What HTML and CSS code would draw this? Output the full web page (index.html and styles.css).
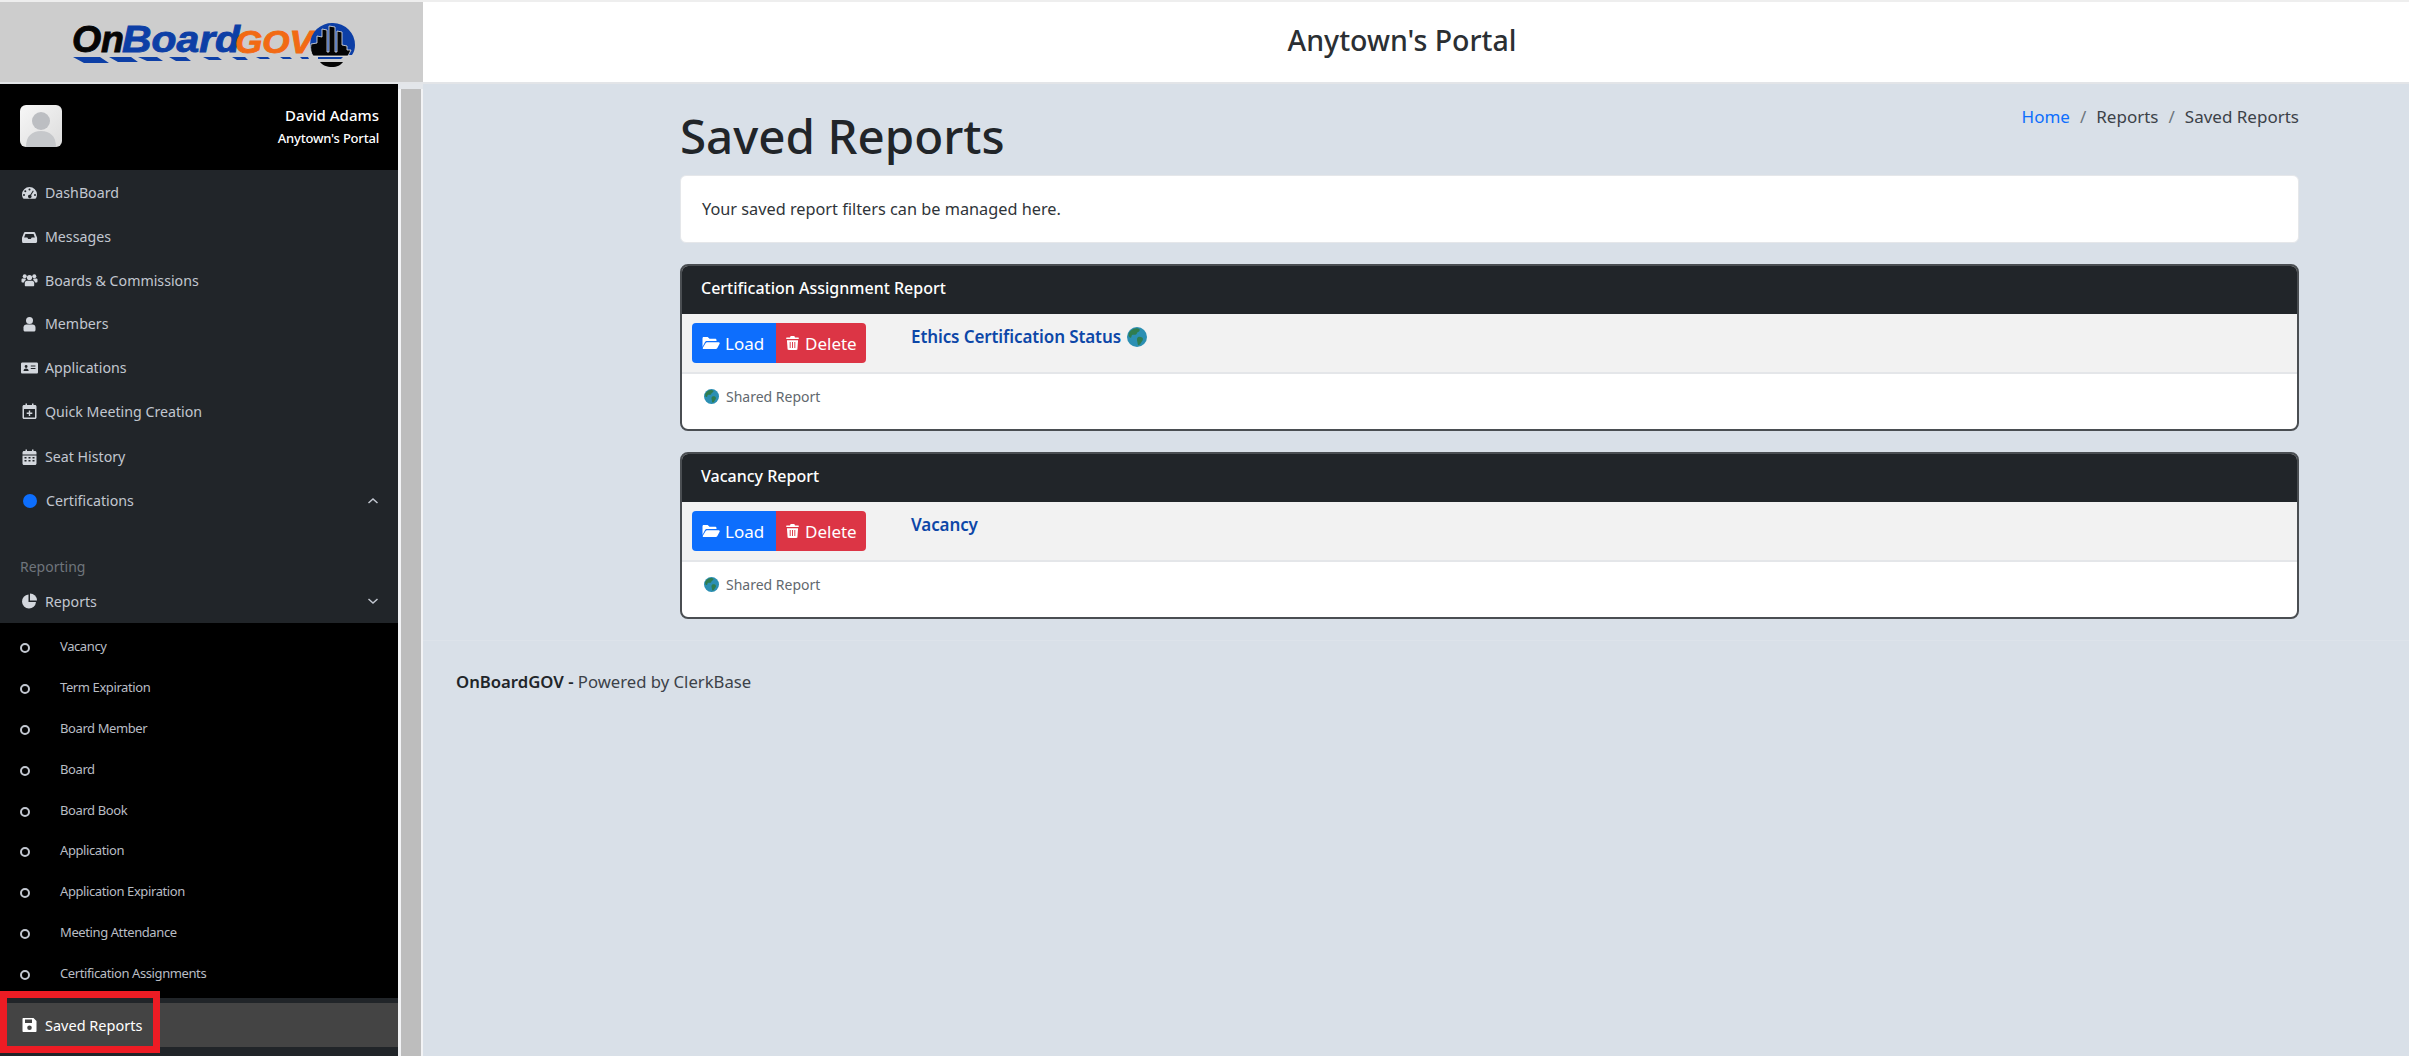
FILE: index.html
```html
<!DOCTYPE html>
<html lang="en">
<head>
  <meta charset="UTF-8" />
  <title>Saved Reports | OnBoardGOV</title>
  <link rel="stylesheet" href="styles.css">
</head>
<body>

  <svg class="sprite" xmlns="http://www.w3.org/2000/svg">
    <symbol id="i-gauge" viewBox="0 0 16 16"><path fill-rule="evenodd" d="M8 2a7.5 7.5 0 0 0-7.5 7.5c0 1.4.4 2.7 1 3.8.2.3.5.5.9.5h11.2c.4 0 .7-.2.9-.5.6-1.100 1-2.400 1-3.800A7.500 7.500 0 0 0 8 2zM8 3.500a1 1 0 1 1 0 2 1 1 0 0 1 0-2zM3.800 5.300a1 1 0 1 1 0 2 1 1 0 0 1 0-2zM2.500 9a1 1 0 1 1 0 2 1 1 0 0 1 0-2zM13.500 9a1 1 0 1 1 0 2 1 1 0 0 1 0-2zM11.400 5.400l.9.5-2.700 4.300a1.800 1.800 0 1 1-.9-.5z"/></symbol>
    <symbol id="i-inbox" viewBox="0 0 16 16"><path fill-rule="evenodd" d="M3.500 3h9c.5 0 .9.300 1.100.7l1.900 4.800c.1.200.1.400.1.600v3.400c0 .8-.7 1.500-1.500 1.500h-13C.8 13.500.5 12.800.500 12V9.100c0-.2 0-.4.100-.6l1.900-4.800c.2-.4.600-.7 1-.7zM3.900 5L2.600 8.500h3.200l.9 1.500h2.600l.9-1.500h3.200L12.100 5z"/></symbol>
    <symbol id="i-users" viewBox="0 0 16 16"><circle cx="3.200" cy="4.200" r="2"/><circle cx="12.800" cy="4.200" r="2"/><circle cx="8" cy="5.500" r="2.600"/><path d="M0 7.500c0-.5.500-1 1-1h3l.4 1.500c-1 .5-1.700 1.500-1.900 2.600H1c-.6 0-1-.4-1-1zM16 7.500c0-.5-.5-1-1-1h-3l-.4 1.500c1 .5 1.700 1.500 1.900 2.600H15c.6 0 1-.4 1-1zM5.500 8.800h5c1.200 0 2.200 1 2.200 2.200v2.200c0 .6-.4 1-1 1H4.300c-.6 0-1-.4-1-1V11c0-1.200 1-2.200 2.200-2.200z"/></symbol>
    <symbol id="i-user" viewBox="0 0 16 16"><circle cx="8" cy="4.500" r="3.500"/><path d="M5 8.500h6c1.700 0 3 1.300 3 3v2.500c0 .8-.7 1.500-1.500 1.500h-9C2.700 15.500 2 14.800 2 14v-2.500c0-1.700 1.300-3 3-3z"/></symbol>
    <symbol id="i-idcard" viewBox="0 0 20 16"><path fill-rule="evenodd" d="M1.500 1.500h17c.8 0 1.500.7 1.500 1.500v10c0 .8-.7 1.500-1.500 1.500h-17C.7 14.500 0 13.800 0 13V3c0-.8.7-1.500 1.500-1.500zM11.500 5v1.200H17V5zM11.500 8v1.200H17V8zM6 4.500a1.700 1.700 0 1 0 0 3.400 1.700 1.700 0 0 0 0-3.400zM3 11.500h6c0-1.500-1-2.800-3-2.800s-3 1.300-3 2.800z"/></symbol>
    <symbol id="i-calplus" viewBox="0 0 16 16"><path fill-rule="evenodd" d="M4 .5h1.500V2h5V.5H12V2h1.500c.8 0 1.500.7 1.500 1.500v11c0 .8-.7 1.500-1.500 1.500h-11C1.700 16 1 15.300 1 14.500v-11C1 2.700 1.700 2 2.500 2H4zM2.500 6v8.500h11V6zM7.300 7.500h1.400v2.100h2.100V11H8.700v2.100H7.300V11H5.200V9.600h2.100z"/></symbol>
    <symbol id="i-calendar" viewBox="0 0 16 16"><path fill-rule="evenodd" d="M4 .5h1.500V2h5V.5H12V2h1.500c.8 0 1.500.7 1.500 1.500V5.500H1V3.500C1 2.700 1.700 2 2.500 2H4zM1 6.500h14v8c0 .8-.7 1.500-1.500 1.500h-11C1.700 16 1 15.300 1 14.500zM3 8v1.500h2V8zM7 8v1.500h2V8zM11 8v1.500h2V8zM3 11v1.500h2V11zM7 11v1.500h2V11zM11 11v1.500h2V11z"/></symbol>
    <symbol id="i-pie" viewBox="0 0 16 16"><path d="M7 1.500A7 7 0 1 0 14.500 9H7z"/><path d="M8.500 .5V7.500h7A7 7 0 0 0 8.500 .5z"/></symbol>
    <symbol id="i-save" viewBox="0 0 16 16"><path fill-rule="evenodd" d="M2 1h10l3 3v10c0 .6-.4 1-1 1H2c-.6 0-1-.4-1-1V2c0-.6.4-1 1-1zM3.500 2.500V6h7V2.500zM8 8.500a2.300 2.300 0 1 0 0 4.600 2.300 2.300 0 0 0 0-4.600z"/></symbol>
    <symbol id="i-folder" viewBox="0 0 18 16"><path d="M1.500 2h4.200l1.800 1.800h5.700c.8 0 1.300.6 1.300 1.300V6H5c-.9 0-1.700.5-2.100 1.300L.5 12V3.500C.5 2.700.9 2 1.500 2z"/><path d="M5 7.300h11.800c.7 0 1.200.8.800 1.400l-2.400 4.500c-.3.500-.8.800-1.300.8H1.600c-.7 0-1.100-.7-.8-1.300l2.900-4.700c.3-.4.800-.7 1.300-.7z"/></symbol>
    <symbol id="i-trash" viewBox="0 0 14 16"><path fill-rule="evenodd" d="M5 .5h4l.7 1.500H13c.6 0 1 .4 1 1s-.4 .8-1 .8H1c-.6 0-1-.2-1-.8s.4-1 1-1h3.300zM1 5h12l-.7 9.500c0 .6-.6 1-1.200 1H2.900c-.6 0-1.200-.4-1.200-1zM4 7v6.500h1V7zM6.500 7v6.500h1V7zM9 7v6.500h1V7z"/></symbol>
    <symbol id="i-globe" viewBox="0 0 16 16"><circle cx="8" cy="8" r="8" fill="#2b8fb3"/><path fill="#2f7d4f" d="M5 1.500c1.800-.8 4-.6 5 .2.600.8-.3 2-1.300 2.300-.8.300-.6 1.500-1.600 2-1 .6-2.200-.2-3 .4-.8.700-.3 1.800-1 2.200C2.400 9 1 7.500 1.200 6 1.500 4 3.300 2.300 5 1.500zM9 8c1.500-.5 3.200.200 3.700 1.200.3 1-.5 2-1.200 3-.6 1-1.500 2.500-2.300 2.300-.9-.3-.6-2-1-3C7.800 10.500 7.800 8.500 9 8z"/></symbol>
  </svg>

  <div class="page">

    <header class="topbar">
      <div class="brand">
        <svg class="logo" width="423" height="80" viewBox="0 2 423 80">
          <text class="logo-on" x="72" y="52" textLength="52" lengthAdjust="spacingAndGlyphs">On</text>
          <text class="logo-board" x="122" y="52" textLength="118" lengthAdjust="spacingAndGlyphs">Board</text>
          <text class="logo-gov" x="235" y="53" textLength="78" lengthAdjust="spacingAndGlyphs">GOV</text>
          <path fill="#0d3fa6" d="M73 57h27l9 6H84zM109 57h22l7 5h-20zM138 57h19l6 4h-16zM169 57h17l5 4h-15zM203 57h15l4 3h-13zM232 57h13l3 3h-11zM256 57h12l2 2h-10zM280 57h10l2 2h-9zM300 57h8l1 2h-7zM318 57h25l-2 2h-23z"/>
          <path fill="#0d3fa6" d="M333 23a22 22 0 0 1 22 22c0 4-1 7-3 10h-38c-3-3-4-7-4-10a22 22 0 0 1 23-22z"/>
          <path fill="#050505" stroke="#e8e8e8" stroke-width=".8" d="M311 44l6-1v-7l5 1v-8l5 1v22h2V26l6 1v25h2V31l5 1v13l5 1v4h4c-1 2-2 4-3 6h-35c-2-3-3-7-2-12z"/>
          <path fill="#050505" d="M320 62h23c-2 3-6 5-11 5s-10-2-12-5z"/>
        </svg>
      </div>
      <h1 class="portal-title">Anytown's Portal</h1>
    </header>

    <div class="body-row">

      <aside class="sidebar">
        <div class="side-panel">
          <div class="user-panel">
            <div class="avatar">
              <svg viewBox="0 0 42 42" width="42" height="42"><circle cx="21" cy="16" r="9" fill="#bcbec2"/><path d="M6 42c0-11 6-16 15-16s15 5 15 16z" fill="#c6c8cb"/></svg>
            </div>
            <div class="user-info">
              <div class="user-name">David Adams</div>
              <div class="user-portal">Anytown's Portal</div>
            </div>
          </div>

          <nav class="nav-main">
            <a class="nav-item"><svg class="icon"><use href="#i-gauge"/></svg>DashBoard</a>
            <a class="nav-item"><svg class="icon"><use href="#i-inbox"/></svg>Messages</a>
            <a class="nav-item"><svg class="icon"><use href="#i-users"/></svg>Boards &amp; Commissions</a>
            <a class="nav-item"><svg class="icon"><use href="#i-user"/></svg>Members</a>
            <a class="nav-item"><svg class="icon"><use href="#i-idcard"/></svg>Applications</a>
            <a class="nav-item"><svg class="icon"><use href="#i-calplus"/></svg>Quick Meeting Creation</a>
            <a class="nav-item nav-gap"><svg class="icon"><use href="#i-calendar"/></svg>Seat History</a>
            <a class="nav-item"><span class="dot"></span>Certifications<svg class="chevron" viewBox="0 0 12 8"><path d="M1.500 6L6 2l4.500 4"/></svg></a>
            <div class="nav-heading">Reporting</div>
            <a class="nav-item nav-open"><svg class="icon"><use href="#i-pie"/></svg>Reports<svg class="chevron" viewBox="0 0 12 8"><path d="M1.500 2L6 6l4.500-4"/></svg></a>
          </nav>

          <ul class="nav-sub">
            <li>Vacancy</li>
            <li>Term Expiration</li>
            <li>Board Member</li>
            <li>Board</li>
            <li>Board Book</li>
            <li>Application</li>
            <li>Application Expiration</li>
            <li>Meeting Attendance</li>
            <li>Certification Assignments</li>
          </ul>

          <div class="nav-bottom">
            <a class="nav-item nav-active"><svg class="icon"><use href="#i-save"/></svg>Saved Reports</a>
          </div>
        </div>
        <div class="side-scroll"><div class="side-track"></div></div>
        <div class="callout"></div>
      </aside>

      <main class="main">
        <div class="content">
          <div class="page-head">
            <h2>Saved Reports</h2>
            <ol class="crumbs">
              <li><a>Home</a></li>
              <li>Reports</li>
              <li>Saved Reports</li>
            </ol>
          </div>

          <div class="intro">Your saved report filters can be managed here.</div>

          <section class="report">
            <div class="report-head">Certification Assignment Report</div>
            <div class="report-row">
              <div class="btn-group">
                <button class="btn btn-load"><svg class="btn-icon"><use href="#i-folder"/></svg>Load</button>
                <button class="btn btn-delete"><svg class="btn-icon trash"><use href="#i-trash"/></svg>Delete</button>
              </div>
              <a class="report-link">Ethics Certification Status <svg class="globe"><use href="#i-globe"/></svg></a>
            </div>
            <div class="report-foot"><svg class="globe"><use href="#i-globe"/></svg>Shared Report</div>
          </section>

          <section class="report">
            <div class="report-head">Vacancy Report</div>
            <div class="report-row">
              <div class="btn-group">
                <button class="btn btn-load"><svg class="btn-icon"><use href="#i-folder"/></svg>Load</button>
                <button class="btn btn-delete"><svg class="btn-icon trash"><use href="#i-trash"/></svg>Delete</button>
              </div>
              <a class="report-link">Vacancy</a>
            </div>
            <div class="report-foot"><svg class="globe"><use href="#i-globe"/></svg>Shared Report</div>
          </section>
        </div>

        <footer class="footer"><strong>OnBoardGOV -</strong> Powered by ClerkBase</footer>
      </main>

    </div>
  </div>

</body>
</html>
```
FILE: styles.css
```css
:root {
  --bg: #d9e0e8;
  --dark: #212529;
  --side-text: #c2c7d0;
  --text: #212529;
}

* { box-sizing: border-box; }

html, body {
  margin: 0;
  height: 100%;
  overflow: hidden;
}

body {
  font-family: "Noto Sans", "Open Sans", sans-serif;
  font-size: 16px;
  color: var(--text);
  background: var(--bg);
}

.sprite {
  width: 0;
  height: 0;
  display: block;
  overflow: hidden;
}

.page {
  height: 1056px;
  display: flex;
  flex-direction: column;
}

/* top bar */
.topbar {
  height: 84px;
  flex: none;
  display: flex;
  background: #fff;
  border-top: 2px solid #eee;
  border-bottom: 2px solid #e3e5e8;
}

.brand {
  width: 423px;
  flex: none;
  background: #cdcdcd;
}

.logo { display: block; }

.logo text {
  font-family: "Liberation Sans", sans-serif;
  font-weight: bold;
  font-style: italic;
  stroke-width: 0.9;
}

.logo-on { font-size: 37px; fill: #050505; stroke: #050505; }
.logo-board { font-size: 37px; fill: #0d3fa6; stroke: #0d3fa6; }
.logo-gov { font-size: 31px; fill: #f26a14; stroke: #f26a14; }

.portal-title {
  flex: 1;
  margin: 0;
  padding-right: 28px;
  text-align: center;
  font-size: 28.500px;
  font-weight: 500;
  line-height: 76px;
  color: #2b2f33;
}

.body-row {
  flex: 1;
  display: flex;
  min-height: 0;
}

/* sidebar */
.sidebar {
  width: 423px;
  flex: none;
  display: flex;
  position: relative;
  background: #fff;
}

.side-panel {
  width: 398px;
  flex: none;
  background: var(--dark);
  display: flex;
  flex-direction: column;
}

.side-scroll {
  width: 25px;
  padding: 5px 2px 0 3px;
  background: linear-gradient(#e3e6ea 5px, #f2f3f5 5px);
}

.side-track {
  height: 100%;
  background: #bdbdbd;
}

.user-panel {
  height: 86px;
  flex: none;
  background: #000;
  display: flex;
  align-items: center;
  justify-content: space-between;
  padding: 0 19px 3px 20px;
  color: #fff;
}

.avatar {
  width: 42px;
  height: 42px;
  border-radius: 6px;
  overflow: hidden;
  background: linear-gradient(135deg, #f7f7f7, #dcdcdc);
}

.avatar svg { display: block; }

.user-info {
  text-align: right;
  padding-top: 3px;
}

.user-name {
  font-size: 15px;
  font-weight: 500;
  line-height: 22px;
}

.user-portal {
  font-size: 13px;
  font-weight: 500;
  line-height: 25px;
  letter-spacing: -0.2px;
}

.nav-main { padding-top: 1px; }

.nav-item {
  height: 43.700px;
  display: flex;
  align-items: center;
  padding: 0 19px 0 21px;
  font-size: 14.200px;
  color: var(--side-text);
}

.nav-gap { margin-top: 2px; }

.icon {
  width: 17px;
  height: 16px;
  margin-right: 7px;
  fill: #d3d7dd;
  flex: none;
}

.dot {
  width: 14px;
  height: 14px;
  margin: 0 9px 0 2px;
  border-radius: 50%;
  background: #0d6efd;
}

.chevron {
  width: 12px;
  height: 8px;
  margin-left: auto;
  fill: none;
  stroke: #c2c7d0;
  stroke-width: 1.500;
}

.nav-heading {
  margin-top: 21px;
  height: 43px;
  display: flex;
  align-items: flex-end;
  padding: 0 0 11px 20px;
  font-size: 14px;
  color: #6f757c;
}

.nav-open {
  height: 36px;
  padding-bottom: 7px;
}

.nav-sub {
  list-style: none;
  margin: 0;
  padding: 3px 0 0;
  height: 375px;
  flex: none;
  background: #000;
}

.nav-sub li {
  height: 40.900px;
  display: flex;
  align-items: center;
  padding-left: 60px;
  font-size: 13px;
  letter-spacing: -0.4px;
  color: #b9bdc4;
  position: relative;
}

.nav-sub li::before {
  content: "";
  position: absolute;
  left: 20px;
  top: 50%;
  width: 6px;
  height: 6px;
  margin-top: -3px;
  border: 2px solid #c2c7d0;
  border-radius: 50%;
}

.nav-bottom { padding-top: 5px; }

.nav-active {
  height: 44px;
  background: #444;
  color: #fff;
  font-size: 14.500px;
}

.nav-active .icon { fill: #fff; }

/* red annotation box round the active link */
.callout {
  position: absolute;
  left: 0;
  top: 907px;
  width: 160px;
  height: 62px;
  border: 7px solid #ed1c24;
}

/* main area */
.main {
  flex: 1;
  min-width: 0;
}

.content {
  padding: 0 110px 0 257px;
}

.page-head {
  display: flex;
  justify-content: space-between;
  align-items: flex-start;
  height: 91px;
}

.page-head h2 {
  margin: 20px 0 0;
  font-size: 47.500px;
  font-weight: 500;
  line-height: 64px;
  color: var(--text);
}

.crumbs {
  list-style: none;
  display: flex;
  margin: 19px 0 0;
  padding: 0;
  font-size: 17px;
  line-height: 28px;
  color: #3c4248;
}

.crumbs li + li::before {
  content: "/";
  padding: 0 10px;
  color: #6c757d;
}

.crumbs a { color: #0d6efd; }

.intro {
  height: 68px;
  display: flex;
  align-items: center;
  padding: 0 21px;
  background: #fff;
  border: 1px solid #e5e7ea;
  border-radius: 6px;
  font-size: 16.300px;
  color: #2f3439;
  margin-bottom: 21px;
}

.report {
  background: #fff;
  border: 2px solid #4a4e52;
  border-radius: 8px;
  overflow: hidden;
  margin-bottom: 21px;
}

.report-head {
  height: 48px;
  display: flex;
  align-items: center;
  padding: 0 19px 4px;
  background: var(--dark);
  color: #fff;
  font-size: 16px;
  font-weight: 500;
}

.report-row {
  height: 60px;
  display: flex;
  align-items: flex-start;
  padding: 9px 10px 0;
  background: #f2f2f2;
  border-bottom: 2px solid #e4e6e9;
}

.btn-group { display: flex; }

.btn {
  height: 40px;
  display: flex;
  align-items: center;
  border: none;
  color: #fff;
  font-family: inherit;
  font-size: 17px;
  padding: 0;
}

.btn-load {
  width: 84px;
  padding-left: 10px;
  background: #0d6efd;
  border-radius: 4px 0 0 4px;
}

.btn-delete {
  width: 90px;
  padding-left: 10px;
  background: #dc3545;
  border-radius: 0 4px 4px 0;
}

.btn-icon {
  width: 18px;
  height: 16px;
  margin-right: 5px;
  fill: #fff;
}

.btn-icon.trash {
  width: 13px;
  margin-right: 6px;
}

.report-link {
  margin: 2px 0 0 45px;
  display: flex;
  align-items: center;
  font-size: 17px;
  font-weight: 600;
  letter-spacing: -0.1px;
  color: #0d47a8;
}

.report-link .globe {
  margin: 0 0 0 6px;
  width: 20px;
  height: 20px;
}

.globe {
  width: 15px;
  height: 15px;
  margin-right: 7px;
  flex: none;
}

.report-foot {
  height: 55px;
  display: flex;
  align-items: flex-start;
  padding: 15px 0 0 22px;
  font-size: 14px;
  line-height: 16px;
  color: #62686e;
}

.footer {
  margin-top: 9px;
  padding: 29px 0 0 33px;
  border-top: 1px solid #dde3ea;
  font-size: 16.700px;
  color: #3c4248;
}

.footer strong {
  font-weight: 600;
  color: var(--text);
}
```
